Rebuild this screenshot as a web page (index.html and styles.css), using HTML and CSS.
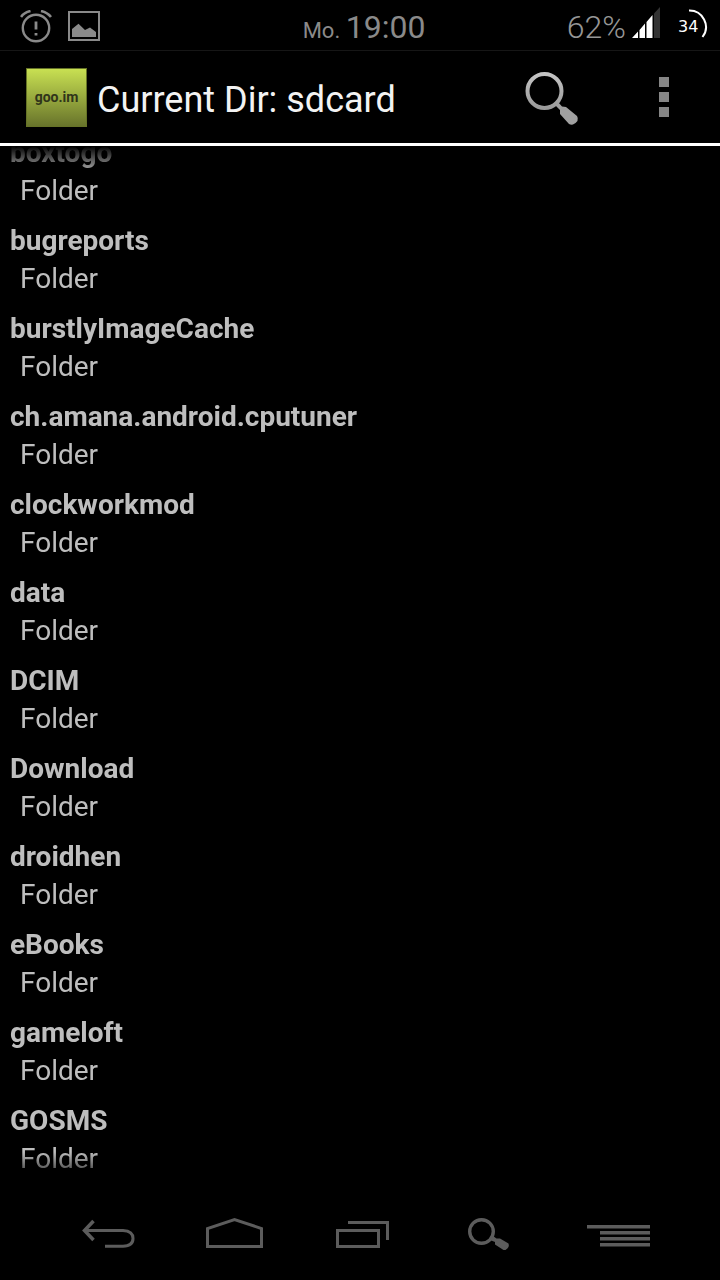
FILE: index.html
```
<!DOCTYPE html>
<html lang="en">
<head>
    <meta charset="UTF-8">
    <meta name="viewport" content="width=device-width, initial-scale=1.0">
    <title>Current Dir: sdcard</title>
    <link rel="stylesheet" href="styles.css">
</head>
<body>
    <div class="status-bar">
        <div class="notifications">
            <svg width="32" height="34" viewBox="0 0 32 34" fill="none" stroke="#8a8a8a">
                <circle cx="16" cy="18" r="13.2" stroke-width="2.400"/>
                <path d="M1 7Q4 2.500 10.500 1M21 1Q27.500 2.500 31 7" stroke-width="2.600"/>
                <path d="M16 11.500V19.500M16 23V25.500" stroke-width="2.800"/>
            </svg>
            <svg width="32" height="32" viewBox="0 0 32 32">
                <rect x="1" y="1" width="30" height="28" fill="none" stroke="#8a8a8a" stroke-width="2"/>
                <path d="M4 26V18L10.500 12.800L17 19L22 16.500L28 21V26Z" fill="#8a8a8a"/>
            </svg>
        </div>
        <div class="clock"><span class="day">Mo.</span> <span class="time">19:00</span></div>
        <div class="indicators">
            <span class="battery">62%</span>
            <svg class="signal" width="28" height="32" viewBox="0 0 28 32" fill="#fff">
                <path d="M0 31L6 24.500V31ZM7.500 23L13 16.500V31H7.500ZM14.500 15L20.500 8V31H14.500Z"/>
                <path d="M22 6.500L28 0V31H22Z" fill="#333"/>
            </svg>
            <svg class="ring" width="30" height="32" viewBox="0 0 30 32">
                <path d="M11 1.500A16.500 16.500 0 0 1 24.500 28" fill="none" stroke="#fff" stroke-width="2"/>
                <text x="0" y="23" class="ring-text">34</text>
            </svg>
        </div>
    </div>

    <header class="action-bar">
        <div class="app-icon">goo.im</div>
        <h1>Current Dir: sdcard</h1>
        <button class="icon-button" aria-label="Search">
            <svg width="56" height="56" viewBox="0 0 56 56">
                <defs>
                    <linearGradient id="lens" x1="0" y1="0" x2="0" y2="1">
                        <stop offset="0" stop-color="#c4c4c4"/>
                        <stop offset="1" stop-color="#9a9a9a"/>
                    </linearGradient>
                </defs>
                <circle cx="20.500" cy="22" r="17" fill="none" stroke="url(#lens)" stroke-width="4"/>
                <path d="M31 36L34 33L38 37.500L42 38L53 47Q56 52 49 55.500Q47 56 45 55L36 45V41Z" fill="#a0a0a0"/>
            </svg>
        </button>
        <button class="icon-button" aria-label="More options">
            <svg width="10" height="40" viewBox="0 0 10 40" fill="#868686">
                <path d="M0 0H10V10H0ZM0 15H10V25H0ZM0 30H10V40H0Z"/>
            </svg>
        </button>
    </header>

    <main class="file-list">
        <a class="entry" href="#"><strong>boxtogo</strong><span>Folder</span></a>
        <a class="entry" href="#"><strong>bugreports</strong><span>Folder</span></a>
        <a class="entry" href="#"><strong>burstlyImageCache</strong><span>Folder</span></a>
        <a class="entry" href="#"><strong>ch.amana.android.cputuner</strong><span>Folder</span></a>
        <a class="entry" href="#"><strong>clockworkmod</strong><span>Folder</span></a>
        <a class="entry" href="#"><strong>data</strong><span>Folder</span></a>
        <a class="entry" href="#"><strong>DCIM</strong><span>Folder</span></a>
        <a class="entry" href="#"><strong>Download</strong><span>Folder</span></a>
        <a class="entry" href="#"><strong>droidhen</strong><span>Folder</span></a>
        <a class="entry" href="#"><strong>eBooks</strong><span>Folder</span></a>
        <a class="entry" href="#"><strong>gameloft</strong><span>Folder</span></a>
        <a class="entry" href="#"><strong>GOSMS</strong><span>Folder</span></a>
    </main>

    <nav class="nav-bar">
        <button aria-label="Back">
            <svg width="64" height="40" viewBox="0 0 64 40" fill="none" stroke="#5c5c5c" stroke-width="3">
                <path d="M11 16.500H48Q58 17 58 24.500Q58 32 48 32.200H30"/>
                <path d="M18.500 7L9.500 16.500L18.500 26" stroke-width="3.500"/>
            </svg>
        </button>
        <button aria-label="Home">
            <svg width="64" height="40" viewBox="1 0 64 40" fill="none" stroke="#5c5c5c" stroke-width="3">
                <path d="M5.500 32.500V14.500L32.500 5.500L59.500 14.500V32.500Z"/>
            </svg>
        </button>
        <button aria-label="Recent apps">
            <svg width="64" height="40" viewBox="2 0 64 40" fill="none" stroke="#5c5c5c" stroke-width="3">
                <path d="M8.500 16.500H49.500V32.500H8.500ZM19 8.500H58.500V26"/>
            </svg>
        </button>
        <button aria-label="Search">
            <svg width="64" height="40" viewBox="6 0 64 40" fill="#5c5c5c">
                <circle cx="28.500" cy="17.500" r="11.800" fill="none" stroke="#5c5c5c" stroke-width="3.400"/>
                <path d="M37 26L40 22L43.500 24.500H47L55.500 29.500Q57 33 52.500 36H50.500L42 30.500V28Z"/>
            </svg>
        </button>
        <button aria-label="Menu">
            <svg width="64" height="40" viewBox="0 0 64 40" fill="#5c5c5c">
                <path d="M0 11H63V14.500H0ZM13 17H63V20.500H13ZM13 23H63V26.500H13ZM13 29H63V32.500H13Z"/>
            </svg>
        </button>
    </nav>
</body>
</html>
```

FILE: styles.css
```
/* General Reset */
* {
    box-sizing: border-box;
}

body, h1, button {
    margin: 0;
    padding: 0;
    font-family: Roboto, sans-serif;
}

body {
    display: flex;
    flex-direction: column;
    height: 100vh;
    background: #000;
    color: #bebebe;
    overflow: hidden;
}

svg {
    display: block;
}

button {
    display: flex;
    align-items: center;
    justify-content: center;
    background: none;
    border: none;
    cursor: pointer;
}

/* Status bar */
.status-bar {
    display: grid;
    grid-template-columns: 1fr auto 1fr;
    align-items: center;
    height: 51px;
    padding: 0 12px 0 20px;
    border-bottom: 1px solid #161616;
    color: #8a8a8a;
}

.notifications {
    display: flex;
    align-items: center;
    gap: 16px;
}

.clock {
    padding-top: 4px;
    font-size: 22px;
    line-height: 46px;
}

.time, .battery {
    font-size: 32px;
}

.indicators {
    display: flex;
    align-items: center;
    justify-content: flex-end;
    gap: 6px;
}

.battery {
    color: #969696;
    font-weight: 300;
    line-height: 48px;
}

.signal {
    margin: 0 12px 8px 0;
}

.ring {
    margin-bottom: 4px;
}

.ring-text {
    font-family: "DejaVu Sans", sans-serif;
    font-size: 16px;
    fill: #fff;
}

/* Action bar */
.action-bar {
    display: flex;
    align-items: center;
    height: 95px;
    padding-left: 26px;
    border-bottom: 3px solid #fff;
}

.app-icon {
    width: 61px;
    height: 59px;
    margin-right: 10px;
    border: 1px solid #667327;
    background: linear-gradient(#c8e052, #68742b);
    color: #30351a;
    font-size: 14px;
    font-weight: bold;
    line-height: 57px;
    text-align: center;
}

h1 {
    flex: 1;
    padding-top: 6px;
    color: #f3f3f3;
    font-size: 36px;
    font-weight: normal;
}

.icon-button {
    width: 112px;
    height: 92px;
}

/* File list, scrolled part of the way down */
.file-list {
    flex: 1;
    min-height: 0;
    display: flex;
    flex-direction: column;
    justify-content: flex-end;
    overflow: hidden;
    mask-image: linear-gradient(transparent, #000 28px, #000 calc(100% - 32px), transparent);
}

.entry {
    flex: none;
    display: flex;
    flex-direction: column;
    padding: 6px 10px;
    color: #bebebe;
    font-size: 28px;
    line-height: 38px;
    text-decoration: none;
}

.entry span {
    padding-left: 10px;
}

/* Navigation bar */
.nav-bar {
    display: flex;
    justify-content: space-between;
    height: 96px;
    padding: 4px 65px 0 71px;
}

.nav-bar button {
    width: 72px;
}
```
